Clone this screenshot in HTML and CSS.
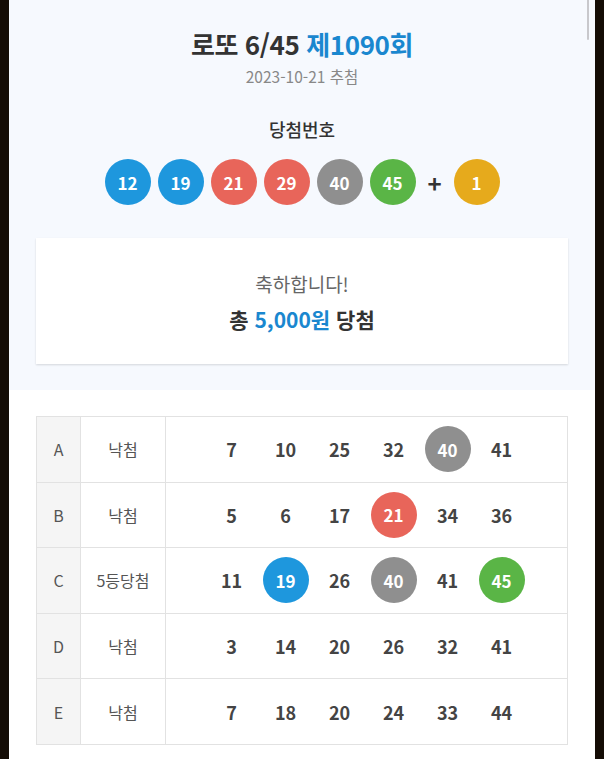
FILE: index.html
```html
<!DOCTYPE html>
<html lang="ko">
<head>
<meta charset="utf-8">
<link rel="stylesheet" href="styles.css">
</head>
<body>
<div class="screen">
  <div class="scroll-thumb"></div>
  <section class="top">
    <h1 class="title">로또 6/45 <span class="round">제1090회</span></h1>
    <p class="date">2023-10-21 추첨</p>
    <h2 class="sub">당첨번호</h2>
    <div class="balls">
      <span class="ball blue">12</span>
      <span class="ball blue">19</span>
      <span class="ball red">21</span>
      <span class="ball red">29</span>
      <span class="ball grey">40</span>
      <span class="ball green">45</span>
      <span class="plus">+</span>
      <span class="ball yellow">1</span>
    </div>
    <div class="card">
      <p class="congrats">축하합니다!</p>
      <p class="prize">총 <span class="amount">5,000원</span> 당첨</p>
    </div>
  </section>
  <section class="bottom">
    <table class="results">
      <tr>
        <td class="key">A</td><td class="status">낙첨</td>
        <td class="nums"><div class="row"><span>7</span><span>10</span><span>25</span><span>32</span><span class="ball grey">40</span><span>41</span></div></td>
      </tr>
      <tr>
        <td class="key">B</td><td class="status">낙첨</td>
        <td class="nums"><div class="row"><span>5</span><span>6</span><span>17</span><span class="ball red">21</span><span>34</span><span>36</span></div></td>
      </tr>
      <tr>
        <td class="key">C</td><td class="status">5등당첨</td>
        <td class="nums"><div class="row"><span>11</span><span class="ball blue">19</span><span>26</span><span class="ball grey">40</span><span>41</span><span class="ball green">45</span></div></td>
      </tr>
      <tr>
        <td class="key">D</td><td class="status">낙첨</td>
        <td class="nums"><div class="row"><span>3</span><span>14</span><span>20</span><span>26</span><span>32</span><span>41</span></div></td>
      </tr>
      <tr>
        <td class="key">E</td><td class="status">낙첨</td>
        <td class="nums"><div class="row"><span>7</span><span>18</span><span>20</span><span>24</span><span>33</span><span>44</span></div></td>
      </tr>
    </table>
  </section>
</div>
</body>
</html>
```
FILE: styles.css
```css
html, body {
  margin: 0;
  padding: 0;
  background: #140c05;
}
body {
  font-family: "Noto Sans CJK KR", "Noto Sans", sans-serif;
  color: #333;
}
.screen {
  position: relative;
  margin-left: 9px;
  width: 586px;
  height: 759px;
  background: #fff;
  overflow: hidden;
}
.scroll-thumb {
  position: absolute;
  right: 6px;
  top: -6px;
  width: 2px;
  height: 46px;
  border-radius: 2px;
  background: #c8c8cc;
}
.top {
  background: #f6f9fe;
  padding: 25px 27px 26px;
  text-align: center;
}
.title {
  margin: 0;
  font-size: 26px;
  font-weight: 700;
  line-height: 38px;
  color: #333;
  letter-spacing: -0.4px;
}
.round { color: #1a87cf; }
.date {
  margin: 2px 0 0;
  font-size: 15.5px;
  line-height: 22px;
  color: #888;
}
.sub {
  margin: 29px 0 0;
  font-size: 18px;
  font-weight: 500;
  line-height: 26px;
  color: #333;
}
.balls {
  margin-top: 17px;
  display: flex;
  justify-content: center;
  align-items: center;
  gap: 7px;
}
.ball {
  display: inline-flex;
  align-items: center;
  justify-content: center;
  width: 46px;
  height: 46px;
  border-radius: 50%;
  color: #fff;
  font-size: 17px;
  font-weight: 700;
}
.blue { background: #1e97dd; }
.red { background: #e8655a; }
.grey { background: #8f8f8f; }
.green { background: #5ab546; }
.yellow { background: #e6aa1c; }
.plus {
  width: 24px;
  font-size: 24px;
  font-weight: 700;
  color: #333;
  text-align: center;
}
.card {
  margin-top: 33px;
  background: #fff;
  padding: 32px 0 30px;
  box-shadow: 0 1px 2px rgba(0,0,0,0.14);
}
.congrats {
  margin: 0;
  font-size: 19px;
  line-height: 28px;
  color: #666;
}
.prize {
  margin: 6px 0 0;
  font-size: 21px;
  font-weight: 700;
  line-height: 30px;
  color: #333;
}
.amount { color: #1a87cf; }
.bottom {
  padding: 26px 27px 0;
}
.results {
  width: 532px;
  border-collapse: collapse;
  border: 1px solid #e2e2e2;
}
.results td {
  border: 1px solid #e2e2e2;
  height: 64.6px;
  padding: 0;
  text-align: center;
  font-size: 16px;
  color: #555;
}
.key {
  width: 43px;
  background: #f5f5f5;
}
.status {
  width: 84px;
}
.row {
  display: flex;
  justify-content: center;
}
.row span {
  width: 54px;
  height: 46px;
  display: flex;
  align-items: center;
  justify-content: center;
  font-size: 18px;
  font-weight: 700;
  color: #444;
}
.row span.ball {
  width: 46px;
  margin: 0 4px;
  color: #fff;
  font-size: 17px;
}
```
